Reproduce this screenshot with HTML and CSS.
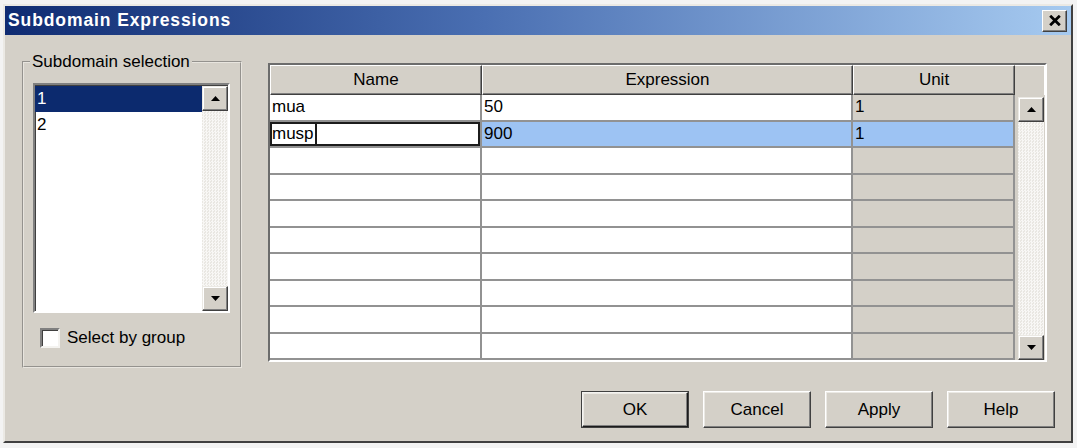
FILE: index.html
```html
<!DOCTYPE html>
<html lang="en">
<head>
    <meta charset="UTF-8">
    <title>Subdomain Expressions</title>
    <link rel="stylesheet" href="styles.css">
</head>
<body>
    <div class="dialog">
        <div class="titlebar">
            <span class="title">Subdomain Expressions</span>
            <button class="close">
                <svg width="12" height="11" viewBox="0 0 12 11"><path d="M1.2 0.8 L10.8 10.2 M10.8 0.8 L1.2 10.2" stroke="#000" stroke-width="2.8"/></svg>
            </button>
        </div>

        <div class="content">
            <div class="main">
                <!-- Subdomain list -->
                <fieldset class="group">
                    <legend>Subdomain selection</legend>
                    <div class="listbox">
                        <ul class="items">
                            <li class="selected">1</li>
                            <li>2</li>
                        </ul>
                        <div class="scrollbar">
                            <div class="arrow"><svg width="9" height="5" viewBox="0 0 9 5"><polygon points="0,5 9,5 4.5,0" fill="#000"/></svg></div>
                            <div class="track"></div>
                            <div class="arrow"><svg width="9" height="5" viewBox="0 0 9 5"><polygon points="0,0 9,0 4.5,5" fill="#000"/></svg></div>
                        </div>
                    </div>
                    <label class="check"><span class="box"></span>Select by group</label>
                </fieldset>

                <!-- Expression table -->
                <div class="grid">
                    <div class="grid-body">
                        <div class="head">
                            <div class="hcell">Name</div>
                            <div class="hcell">Expression</div>
                            <div class="hcell">Unit</div>
                        </div>
                        <div class="rows">
                            <div class="row">
                                <div class="cell">mua</div>
                                <div class="cell">50</div>
                                <div class="cell unit">1</div>
                            </div>
                            <div class="row current">
                                <div class="cell"><div class="editor"><span class="edit-text">musp</span></div></div>
                                <div class="cell">900</div>
                                <div class="cell unit">1</div>
                            </div>
                            <div class="row"><div class="cell"></div><div class="cell"></div><div class="cell unit"></div></div>
                            <div class="row"><div class="cell"></div><div class="cell"></div><div class="cell unit"></div></div>
                            <div class="row"><div class="cell"></div><div class="cell"></div><div class="cell unit"></div></div>
                            <div class="row"><div class="cell"></div><div class="cell"></div><div class="cell unit"></div></div>
                            <div class="row"><div class="cell"></div><div class="cell"></div><div class="cell unit"></div></div>
                            <div class="row"><div class="cell"></div><div class="cell"></div><div class="cell unit"></div></div>
                            <div class="row"><div class="cell"></div><div class="cell"></div><div class="cell unit"></div></div>
                            <div class="row"><div class="cell"></div><div class="cell"></div><div class="cell unit"></div></div>
                        </div>
                    </div>
                    <div class="grid-side">
                        <div class="corner"></div>
                        <div class="scrollbar">
                            <div class="arrow"><svg width="9" height="5" viewBox="0 0 9 5"><polygon points="0,5 9,5 4.5,0" fill="#000"/></svg></div>
                            <div class="track"></div>
                            <div class="arrow"><svg width="9" height="5" viewBox="0 0 9 5"><polygon points="0,0 9,0 4.5,5" fill="#000"/></svg></div>
                        </div>
                    </div>
                </div>
            </div>

            <div class="buttons">
                <button class="btn default">OK</button>
                <button class="btn">Cancel</button>
                <button class="btn">Apply</button>
                <button class="btn">Help</button>
            </div>
        </div>
    </div>
</body>
</html>
```

FILE: styles.css
```css
/* Page + window frame */
body {
    margin: 0;
    background: #f3f3f3;
    font-family: "Liberation Sans", Arial, sans-serif;
    font-size: 17px;
    color: #000;
}

.dialog {
    margin: 4px 0 0 3px;
    width: 1070px;
    height: 439px;
    box-sizing: border-box;
    background: #d4d0c8;
    border: 2px solid;
    border-color: #ebe9e4 #404040 #404040 #ebe9e4;
    display: flex;
    flex-direction: column;
}

/* Title bar */
.titlebar {
    height: 29px;
    flex: none;
    display: flex;
    align-items: center;
    justify-content: space-between;
    padding: 0 4px 0 3px;
    background: linear-gradient(90deg, #0f2b72 0%, #4a6fb2 45%, #a6caf0 100%);
}

.title {
    color: #fff;
    font-weight: bold;
    font-size: 17.5px;
    letter-spacing: 0.9px;
}

.close {
    width: 25px;
    height: 22px;
    padding: 0;
    display: flex;
    align-items: center;
    justify-content: center;
    background: #d4d0c8;
    border: 1px solid;
    border-color: #fff #404040 #404040 #fff;
    box-shadow: inset -1px -1px 0 #808080;
}

/* Content */
.content {
    flex: 1;
    display: flex;
    flex-direction: column;
    padding: 18px 16px 0 17px;
}

.main {
    display: flex;
    align-items: flex-start;
    gap: 26px;
}

/* Group box */
.group {
    width: 220px;
    height: 315px;
    box-sizing: border-box;
    margin: 0;
    padding: 12px 10px 0 9px;
    border: 2px groove #e8e5df;
}

.group legend {
    margin-left: -3px;
    padding: 0 2px;
    line-height: 18px;
}

.listbox {
    width: 197px;
    height: 230px;
    box-sizing: border-box;
    display: flex;
    border: 2px solid;
    border-color: #808080 #fff #fff #808080;
    box-shadow: inset 1px 1px 0 #404040;
    background: #fff;
}

.items {
    flex: 1;
    list-style: none;
    margin: 0;
    padding: 1px 0 0 0;
}

.items li {
    height: 26px;
    line-height: 26px;
    padding-left: 2px;
}

.items li.selected {
    background: #0c2a6e;
    color: #fff;
}

/* Scrollbars */
.scrollbar {
    width: 26px;
    display: flex;
    flex-direction: column;
    background: #eceae5;
}

.listbox .scrollbar {
    margin-top: 1px;
}

.scrollbar .track {
    flex: 1;
    background-image: repeating-conic-gradient(#f8f7f5 0 25%, #e9e7e2 0 50%);
    background-size: 3px 3px;
}

.arrow {
    height: 25px;
    box-sizing: border-box;
    display: flex;
    align-items: center;
    justify-content: center;
    background: #d4d0c8;
    border: 1px solid;
    border-color: #ebe9e4 #404040 #404040 #ebe9e4;
    box-shadow: inset -1px -1px 0 #808080, inset 1px 1px 0 #fff;
}

/* Checkbox */
.check {
    display: flex;
    align-items: center;
    gap: 7px;
    margin: 15px 0 0 7px;
}

.check .box {
    width: 20px;
    height: 20px;
    box-sizing: border-box;
    background: #fff;
    border: 2px solid;
    border-color: #808080 #f4f3f0 #f4f3f0 #808080;
    box-shadow: inset 1px 1px 0 #404040;
}

/* Expression grid */
.grid {
    margin-top: 10px;
    width: 779px;
    height: 299px;
    box-sizing: border-box;
    display: flex;
    border: 2px solid;
    border-color: #6c6c6c #fff #fff #6c6c6c;
    background: #d4d0c8;
}

.grid-body {
    width: 745px;
    display: flex;
    flex-direction: column;
}

.head,
.row {
    display: grid;
    grid-template-columns: 212px 371px 162px;
}

.head {
    height: 30px;
}

.hcell {
    box-sizing: border-box;
    display: flex;
    align-items: center;
    justify-content: center;
    background: #d4d0c8;
    border: 1px solid;
    border-color: #fff #404040 #404040 #fff;
    box-shadow: inset -1px -1px 0 #808080;
}

.rows {
    flex: 1;
    display: grid;
    grid-template-rows: repeat(10, 1fr);
}

.cell {
    box-sizing: border-box;
    background: #fff;
    border-right: 2px solid #929292;
    border-bottom: 2px solid #929292;
    padding-left: 2px;
    display: flex;
    align-items: center;
    overflow: hidden;
}

.cell.unit {
    background: #d4d0c8;
}

.row.current .cell:not(:first-child) {
    background: #9dc3f3;
}

.row.current .cell:first-child {
    padding: 0;
}

.editor {
    width: 100%;
    height: 100%;
    box-sizing: border-box;
    border: 2px solid #1c1c1c;
    background: #fff;
    display: flex;
    align-items: center;
}

.edit-text {
    align-self: stretch;
    display: flex;
    align-items: center;
    padding: 0 1px 0 0;
    border-right: 2px solid #1c1c1c;
}

.grid-side {
    width: 30px;
    display: flex;
    flex-direction: column;
}

.corner {
    height: 30px;
    box-sizing: border-box;
    border-top: 1px solid #fff;
    border-right: 1px solid #fff;
}

.grid-side .scrollbar {
    flex: 1;
    margin: 2px 0 0 3px;
}

/* Dialog buttons */
.buttons {
    display: flex;
    justify-content: flex-end;
    gap: 14px;
    margin-top: 23px;
}

.btn {
    width: 108px;
    height: 37px;
    font: inherit;
    color: #000;
    background: #d4d0c8;
    border: 1px solid;
    border-color: #fff #404040 #404040 #fff;
    box-shadow: inset -1px -1px 0 #808080, inset 1px 1px 0 #ebe9e4;
}

.btn.default {
    border: 2px solid;
    border-color: #f4f3f0 #1c1c1c #1c1c1c #f4f3f0;
    outline: 1px solid #404040;
    outline-offset: -1px;
}
```
